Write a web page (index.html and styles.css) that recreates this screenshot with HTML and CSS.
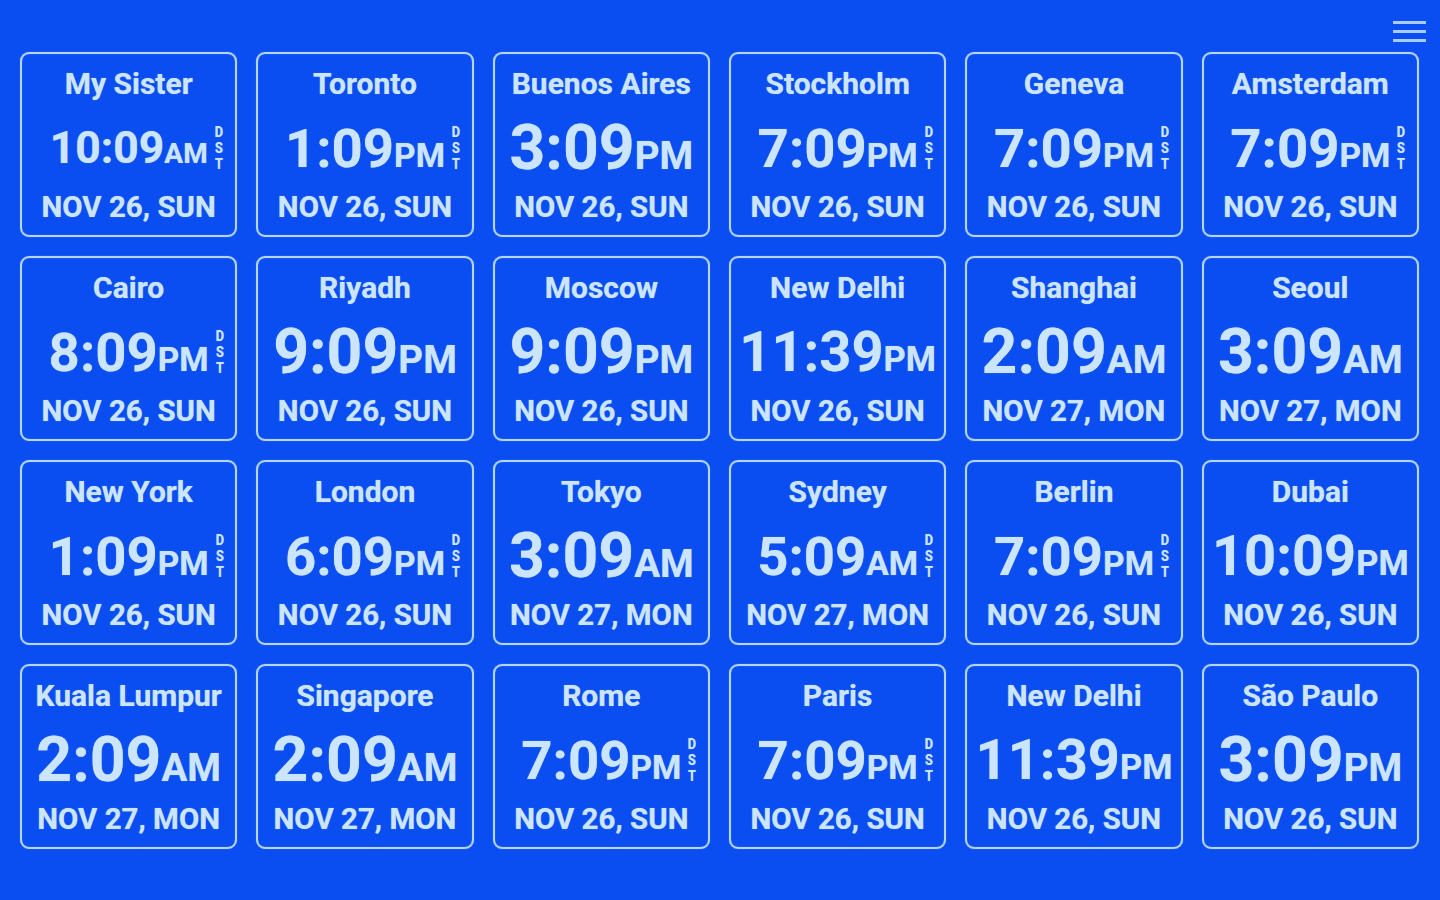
FILE: index.html
```html
<!DOCTYPE html>
<html lang="en">
<head>
    <meta charset="UTF-8">
    <meta name="viewport" content="width=device-width, initial-scale=1.0">
    <title>World Clock</title>
    <link rel="stylesheet" href="styles.css">
</head>
<body>

    <header class="top-bar">
        <button class="menu-btn" aria-label="Menu">
            <span></span><span></span><span></span>
        </button>
    </header>

    <main class="clock-grid">
        <!-- Row 1 -->
        <div class="card">
            <div class="city">My Sister</div>
            <div class="time-line"><span class="time fit-s"><span class="hm">10:09</span><span class="ampm">AM</span><span class="dst">D<br>S<br>T</span></span></div>
            <div class="date">NOV 26, SUN</div>
        </div>
        <div class="card">
            <div class="city">Toronto</div>
            <div class="time-line"><span class="time fit-m"><span class="hm">1:09</span><span class="ampm">PM</span><span class="dst">D<br>S<br>T</span></span></div>
            <div class="date">NOV 26, SUN</div>
        </div>
        <div class="card">
            <div class="city">Buenos Aires</div>
            <div class="time-line"><span class="time fit-xl"><span class="hm">3:09</span><span class="ampm">PM</span></span></div>
            <div class="date">NOV 26, SUN</div>
        </div>
        <div class="card">
            <div class="city">Stockholm</div>
            <div class="time-line"><span class="time fit-m"><span class="hm">7:09</span><span class="ampm">PM</span><span class="dst">D<br>S<br>T</span></span></div>
            <div class="date">NOV 26, SUN</div>
        </div>
        <div class="card">
            <div class="city">Geneva</div>
            <div class="time-line"><span class="time fit-m"><span class="hm">7:09</span><span class="ampm">PM</span><span class="dst">D<br>S<br>T</span></span></div>
            <div class="date">NOV 26, SUN</div>
        </div>
        <div class="card">
            <div class="city">Amsterdam</div>
            <div class="time-line"><span class="time fit-m"><span class="hm">7:09</span><span class="ampm">PM</span><span class="dst">D<br>S<br>T</span></span></div>
            <div class="date">NOV 26, SUN</div>
        </div>

        <!-- Row 2 -->
        <div class="card">
            <div class="city">Cairo</div>
            <div class="time-line"><span class="time fit-m"><span class="hm">8:09</span><span class="ampm">PM</span><span class="dst">D<br>S<br>T</span></span></div>
            <div class="date">NOV 26, SUN</div>
        </div>
        <div class="card">
            <div class="city">Riyadh</div>
            <div class="time-line"><span class="time fit-xl"><span class="hm">9:09</span><span class="ampm">PM</span></span></div>
            <div class="date">NOV 26, SUN</div>
        </div>
        <div class="card">
            <div class="city">Moscow</div>
            <div class="time-line"><span class="time fit-xl"><span class="hm">9:09</span><span class="ampm">PM</span></span></div>
            <div class="date">NOV 26, SUN</div>
        </div>
        <div class="card">
            <div class="city">New Delhi</div>
            <div class="time-line"><span class="time fit-l"><span class="hm">11:39</span><span class="ampm">PM</span></span></div>
            <div class="date">NOV 26, SUN</div>
        </div>
        <div class="card">
            <div class="city">Shanghai</div>
            <div class="time-line"><span class="time fit-xl"><span class="hm">2:09</span><span class="ampm">AM</span></span></div>
            <div class="date">NOV 27, MON</div>
        </div>
        <div class="card">
            <div class="city">Seoul</div>
            <div class="time-line"><span class="time fit-xl"><span class="hm">3:09</span><span class="ampm">AM</span></span></div>
            <div class="date">NOV 27, MON</div>
        </div>

        <!-- Row 3 -->
        <div class="card">
            <div class="city">New York</div>
            <div class="time-line"><span class="time fit-m"><span class="hm">1:09</span><span class="ampm">PM</span><span class="dst">D<br>S<br>T</span></span></div>
            <div class="date">NOV 26, SUN</div>
        </div>
        <div class="card">
            <div class="city">London</div>
            <div class="time-line"><span class="time fit-m"><span class="hm">6:09</span><span class="ampm">PM</span><span class="dst">D<br>S<br>T</span></span></div>
            <div class="date">NOV 26, SUN</div>
        </div>
        <div class="card">
            <div class="city">Tokyo</div>
            <div class="time-line"><span class="time fit-xl"><span class="hm">3:09</span><span class="ampm">AM</span></span></div>
            <div class="date">NOV 27, MON</div>
        </div>
        <div class="card">
            <div class="city">Sydney</div>
            <div class="time-line"><span class="time fit-m"><span class="hm">5:09</span><span class="ampm">AM</span><span class="dst">D<br>S<br>T</span></span></div>
            <div class="date">NOV 27, MON</div>
        </div>
        <div class="card">
            <div class="city">Berlin</div>
            <div class="time-line"><span class="time fit-m"><span class="hm">7:09</span><span class="ampm">PM</span><span class="dst">D<br>S<br>T</span></span></div>
            <div class="date">NOV 26, SUN</div>
        </div>
        <div class="card">
            <div class="city">Dubai</div>
            <div class="time-line"><span class="time fit-l"><span class="hm">10:09</span><span class="ampm">PM</span></span></div>
            <div class="date">NOV 26, SUN</div>
        </div>

        <!-- Row 4 -->
        <div class="card">
            <div class="city">Kuala Lumpur</div>
            <div class="time-line"><span class="time fit-xl"><span class="hm">2:09</span><span class="ampm">AM</span></span></div>
            <div class="date">NOV 27, MON</div>
        </div>
        <div class="card">
            <div class="city">Singapore</div>
            <div class="time-line"><span class="time fit-xl"><span class="hm">2:09</span><span class="ampm">AM</span></span></div>
            <div class="date">NOV 27, MON</div>
        </div>
        <div class="card">
            <div class="city">Rome</div>
            <div class="time-line"><span class="time fit-m"><span class="hm">7:09</span><span class="ampm">PM</span><span class="dst">D<br>S<br>T</span></span></div>
            <div class="date">NOV 26, SUN</div>
        </div>
        <div class="card">
            <div class="city">Paris</div>
            <div class="time-line"><span class="time fit-m"><span class="hm">7:09</span><span class="ampm">PM</span><span class="dst">D<br>S<br>T</span></span></div>
            <div class="date">NOV 26, SUN</div>
        </div>
        <div class="card">
            <div class="city">New Delhi</div>
            <div class="time-line"><span class="time fit-l"><span class="hm">11:39</span><span class="ampm">PM</span></span></div>
            <div class="date">NOV 26, SUN</div>
        </div>
        <div class="card">
            <div class="city">São Paulo</div>
            <div class="time-line"><span class="time fit-xl"><span class="hm">3:09</span><span class="ampm">PM</span></span></div>
            <div class="date">NOV 26, SUN</div>
        </div>
    </main>

</body>
</html>
```

FILE: styles.css
```css
/* Page */
body {
    margin: 0;
    height: 900px;
    overflow: hidden;
    background-color: #0a4df0;
    color: #cbe5ff;
    font-family: Roboto, "Liberation Sans", sans-serif;
    font-weight: 700;
    text-shadow: 0 0 1px rgba(203, 229, 255, 0.7);
}

/* Top bar with menu button */
.top-bar {
    height: 52px;
    display: flex;
    justify-content: flex-end;
    align-items: flex-start;
    padding-right: 14px;
}
.menu-btn {
    margin-top: 21px;
    width: 33px;
    height: 21px;
    padding: 0;
    border: 0;
    background: none;
    display: flex;
    flex-direction: column;
    justify-content: space-between;
    cursor: pointer;
}
.menu-btn span {
    display: block;
    height: 3px;
    background: #a9cbff;
}

/* Grid of clocks */
.clock-grid {
    display: grid;
    grid-template-columns: repeat(6, 1fr);
    grid-auto-rows: 185px;
    column-gap: 19px;
    row-gap: 19px;
    padding: 0 21px 0 20px;
}
.card {
    border: 2px solid #b3d5ff;
    border-radius: 9px;
    box-shadow: 0 0 1px rgba(179, 213, 255, 0.8), inset 0 0 1px rgba(179, 213, 255, 0.8);
    display: flex;
    flex-direction: column;
    align-items: center;
    text-align: center;
    white-space: nowrap;
}
.city {
    margin-top: 10px;
    height: 40px;
    line-height: 40px;
    font-size: 30px;
}
.time-line {
    height: 88px;
    line-height: 88px;
}
.time {
    position: relative;
    display: inline-block;
}
.ampm {
    line-height: 1;
}
.date {
    margin-top: 1px;
    height: 29px;
    line-height: 29px;
    font-size: 29.5px;
}

/* DST marker, sits just right of the time */
.dst {
    position: absolute;
    left: 100%;
    top: 50%;
    margin-left: 6px;
    transform: translateY(-50%) scaleX(0.85);
    font-size: 15px;
    line-height: 16px;
    text-align: center;
}

/* Time sizes, fitted to the card width */
.fit-xl { font-size: 62.5px; }
.fit-xl .ampm { font-size: 38.5px; }
.fit-l { font-size: 56px; }
.fit-l .ampm { font-size: 34.5px; }
.fit-m { font-size: 54.5px; }
.fit-m .ampm { font-size: 33.5px; }
.fit-s { font-size: 44.5px; }
.fit-s .ampm { font-size: 28px; }
```
